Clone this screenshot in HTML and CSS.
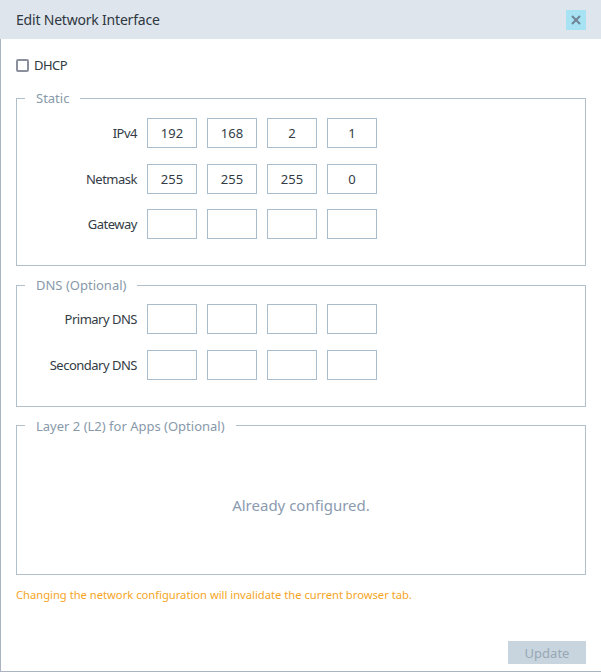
FILE: index.html
```
<!DOCTYPE html>
<html>
<head>
<meta charset="utf-8">
<link rel="stylesheet" href="styles.css">
</head>
<body>
<div class="dialog">
  <div class="header">
    <span class="title">Edit Network Interface</span>
    <button class="close" aria-label="Close">
      <svg width="10" height="10" viewBox="0 0 10 10"><path d="M1 1L9 9M9 1L1 9" stroke="#6f8394" stroke-width="2" fill="none"/></svg>
    </button>
  </div>
  <div class="content">
    <label class="check-row"><span class="checkbox"></span><span>DHCP</span></label>

    <fieldset class="group group-static">
      <legend>Static</legend>
      <div class="rows">
        <div class="row"><span class="lbl">IPv4</span><span class="oct">192</span><span class="oct">168</span><span class="oct">2</span><span class="oct">1</span></div>
        <div class="row"><span class="lbl">Netmask</span><span class="oct">255</span><span class="oct">255</span><span class="oct">255</span><span class="oct">0</span></div>
        <div class="row"><span class="lbl">Gateway</span><span class="oct"></span><span class="oct"></span><span class="oct"></span><span class="oct"></span></div>
      </div>
    </fieldset>

    <fieldset class="group group-dns">
      <legend>DNS (Optional)</legend>
      <div class="rows">
        <div class="row"><span class="lbl">Primary DNS</span><span class="oct"></span><span class="oct"></span><span class="oct"></span><span class="oct"></span></div>
        <div class="row"><span class="lbl">Secondary DNS</span><span class="oct"></span><span class="oct"></span><span class="oct"></span><span class="oct"></span></div>
      </div>
    </fieldset>

    <fieldset class="group group-l2">
      <legend>Layer 2 (L2) for Apps (Optional)</legend>
      <div class="l2-body">Already configured.</div>
    </fieldset>

    <p class="warning">Changing the network configuration will invalidate the current browser tab.</p>

    <div class="footer">
      <button class="update" disabled>Update</button>
    </div>
  </div>
</div>
</body>
</html>
```
FILE: styles.css
```
* { box-sizing: border-box; }
html, body { margin: 0; padding: 0; background: #ffffff; }
body { font-family: "Noto Sans", "Open Sans", sans-serif; color: #2f3a44; }

.dialog {
  width: 601px;
  height: 672px;
  display: flex;
  flex-direction: column;
  border-left: 1px solid #a9b4be;
  border-bottom: 1px solid #a9b4be;
  background: #fff;
}

.header {
  height: 39px;
  flex: none;
  background: #dee5ed;
  display: flex;
  align-items: center;
  justify-content: space-between;
  margin-left: -1px;
  padding: 0 15px 0 16px;
}
.title { font-size: 14px; color: #2f3740; letter-spacing: -0.2px; }
.close {
  width: 20px; height: 20px;
  border: 0; padding: 0; margin: 0;
  background: #a7e3f3;
  display: flex; align-items: center; justify-content: center;
}

.content {
  flex: 1;
  display: flex;
  flex-direction: column;
  padding: 16px 15px 7px 15px;
}

.check-row {
  display: flex;
  align-items: center;
  height: 20px;
  font-size: 13px;
  letter-spacing: -0.5px;
  gap: 5px;
}
.checkbox {
  width: 13px; height: 13px;
  border: 2px solid #8c8f9e;
  border-radius: 2px;
}

.group {
  margin: 0;
  border: 1px solid #b1bfca;
  padding: 0;
  min-width: 0;
}
.group legend {
  font-size: 13px;
  line-height: 16px;
  color: #8799aa;
  padding: 0 11px;
  margin-left: 8px;
}
.group-static { margin-top: 15px; padding: 12px 0 26px 0; }
.group-dns { margin-top: 11px; padding: 11px 0 26px 0; }
.group-l2 { margin-top: 11px; }

.rows { display: flex; flex-direction: column; gap: 15.5px; }
.row { display: flex; align-items: center; gap: 10px; }
.lbl {
  width: 120px;
  text-align: right;
  font-size: 13px;
  letter-spacing: -0.5px;
  color: #333c45;
}
.oct {
  width: 50px; height: 30px;
  border: 1px solid #a9bccb;
  display: flex; align-items: center; justify-content: center;
  font-size: 13px;
  color: #333c45;
}

.l2-body {
  height: 140px;
  padding-top: 2px;
  display: flex;
  align-items: center;
  justify-content: center;
  font-size: 15px;
  color: #8a9bb0;
}

.warning {
  margin: 12px 0 0 0;
  font-size: 11.2px;
  line-height: 16px;
  color: #f5a51d;
}

.footer {
  margin-top: auto;
  display: flex;
  justify-content: flex-end;
}
.update {
  width: 78px; height: 23px;
  border: 0;
  background: #c8d5df;
  color: #98a7b5;
  font-family: "Noto Sans", sans-serif;
  font-size: 13px;
  padding: 0;
}
```
